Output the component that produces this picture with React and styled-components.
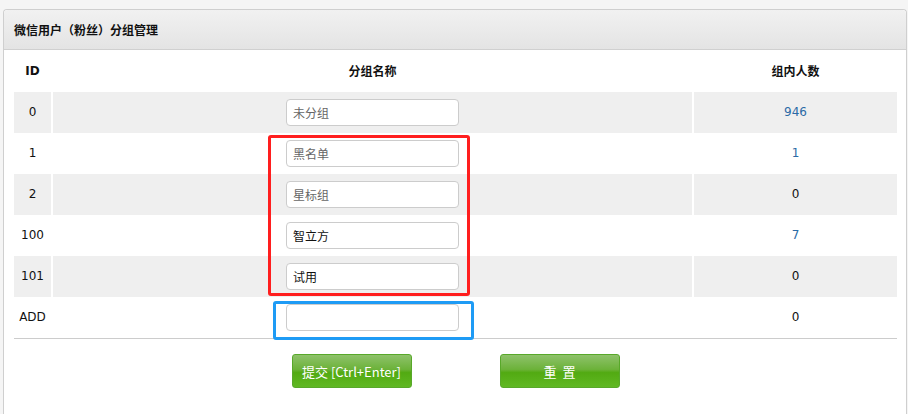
import React from 'react';
import styled, { createGlobalStyle } from 'styled-components';

const GlobalStyle = createGlobalStyle`
  html, body {
    margin: 0;
    padding: 0;
    background: #f5f5f5;
    font-family: "DejaVu Sans", "Noto Sans CJK SC", sans-serif;
    font-size: 12px;
    color: #222;
  }
`;

const Panel = styled.div`
  margin: 9px 1px 0 3px;
  height: 420px;
  background: #fff;
  border: 1px solid #cfcfcf;
  border-bottom: none;
  border-radius: 4px 4px 0 0;
`;

const PanelHead = styled.div`
  height: 39px;
  display: flex;
  align-items: center;
  padding-left: 10px;
  background: linear-gradient(#f1f1f1, #e4e4e4);
  border-bottom: 1px solid #d0d0d0;
  border-radius: 4px 4px 0 0;
  font-family: "Noto Sans CJK SC", sans-serif;
  font-weight: bold;
  font-size: 12px;
  color: #111;
`;

const PanelBody = styled.div`
  padding: 0 9px 0 10px;
`;

const TableWrap = styled.div`
  position: relative;
`;

const Row = styled.div`
  display: grid;
  grid-template-columns: 37px 639px 1fr;
  column-gap: 2px;
  height: ${(p) => (p.head ? 42 : 41)}px;
  background: #fff;
  ${(p) => p.last && 'border-bottom: 1px solid #cccccc;'}
`;

const Cell = styled.div`
  display: flex;
  align-items: center;
  justify-content: center;
  padding-bottom: 1px;
  font-weight: ${(p) => (p.head ? 'bold' : 'normal')};
  color: ${(p) => (p.link ? '#2b6aa6' : '#111')};
  background: ${(p) => (p.striped ? '#efefef' : 'transparent')};
`;

const HeadText = styled.span`
  font-family: "Noto Sans CJK SC", sans-serif;
  font-weight: bold;
  font-size: 12px;
`;

const NameInput = styled.input`
  box-sizing: border-box;
  width: 173px;
  height: 27px;
  margin-top: 1px;
  padding: 0 6px;
  border: 1px solid #cccccc;
  border-radius: 4px;
  background: #fff;
  font-family: "Noto Sans CJK SC", sans-serif;
  font-size: 12px;
  color: ${(p) => (p.muted ? '#666' : '#111')};
  outline: none;
`;

const Mark = styled.div`
  position: absolute;
  box-sizing: border-box;
  border: 3px solid ${(p) => p.color};
  border-radius: 3px;
  pointer-events: none;
`;

const Actions = styled.div`
  display: flex;
  justify-content: center;
  gap: 88px;
  padding-top: 15px;
`;

const GreenButton = styled.button`
  width: 120px;
  height: 34px;
  border: 1px solid #58a82a;
  border-radius: 3px;
  background: linear-gradient(#8ec26b 0%, #6cb239 45%, #52aa12 55%, #60b823 100%);
  color: #fff;
  font-family: "Noto Sans CJK SC", sans-serif;
  font-size: 13px;
  white-space: pre;
  cursor: pointer;
`;

const groups = [
  { id: '0', name: '未分组', count: '946', muted: true, link: true },
  { id: '1', name: '黑名单', count: '1', muted: true, link: true },
  { id: '2', name: '星标组', count: '0', muted: true },
  { id: '100', name: '智立方', count: '7', link: true },
  { id: '101', name: '试用', count: '0' },
];

const App = () => {
  return (
    <>
      <GlobalStyle />
      <Panel>
        <PanelHead>微信用户（粉丝）分组管理</PanelHead>
        <PanelBody>
          <TableWrap>
            <Row head>
              <Cell head>ID</Cell>
              <Cell head><HeadText>分组名称</HeadText></Cell>
              <Cell head><HeadText>组内人数</HeadText></Cell>
            </Row>
            {groups.map((g, i) => (
              <Row key={g.id}>
                <Cell striped={i % 2 === 0}>{g.id}</Cell>
                <Cell striped={i % 2 === 0}>
                  <NameInput defaultValue={g.name} muted={g.muted} />
                </Cell>
                <Cell striped={i % 2 === 0} link={g.link}>{g.count}</Cell>
              </Row>
            ))}
            <Row last>
              <Cell>ADD</Cell>
              <Cell><NameInput /></Cell>
              <Cell>0</Cell>
            </Row>
            <Mark color="#ff1e1e" style={{ left: 254, top: 85, width: 202, height: 161 }} />
            <Mark color="#1e9bf5" style={{ left: 259, top: 251, width: 201, height: 39 }} />
          </TableWrap>
          <Actions>
            <GreenButton>提交 [Ctrl+Enter]</GreenButton>
            <GreenButton>重  置</GreenButton>
          </Actions>
        </PanelBody>
      </Panel>
    </>
  );
};

export default App;
